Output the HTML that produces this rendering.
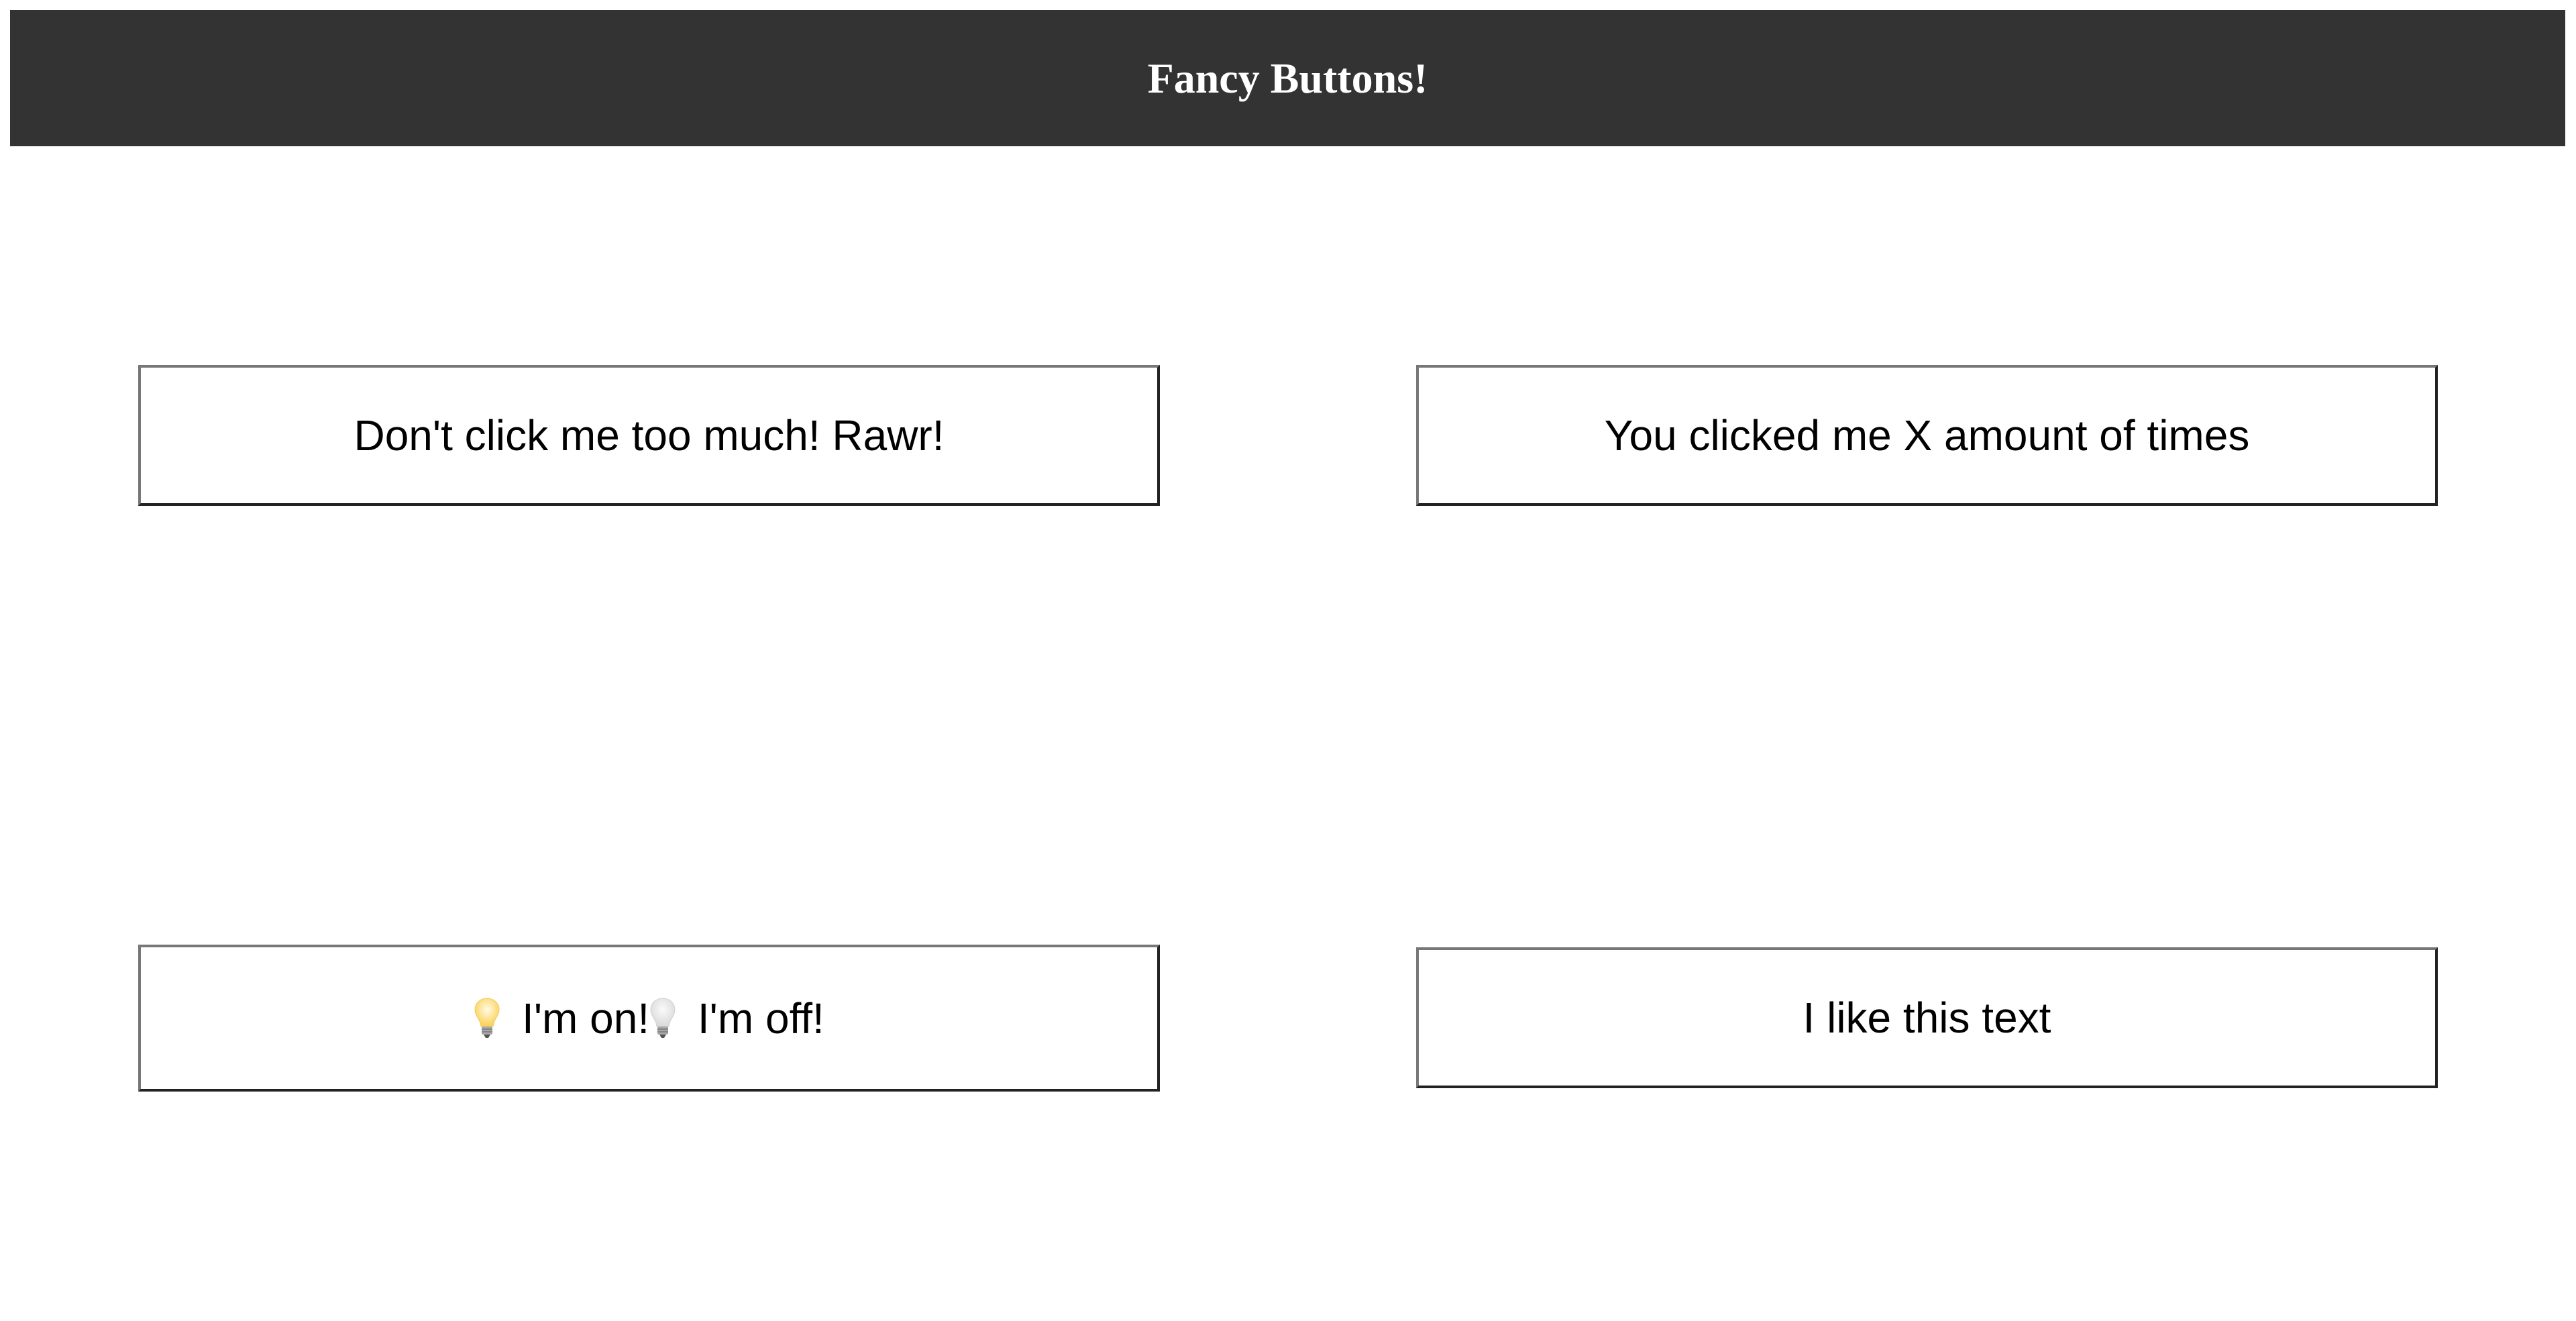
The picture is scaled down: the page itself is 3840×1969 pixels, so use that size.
<!DOCTYPE html>
<html><head><meta charset="utf-8"><style>
html,body{margin:0;padding:0;background:#fff;width:3840px;height:1969px;overflow:hidden;position:relative}
.hdr{position:absolute;left:15px;top:15px;width:3809px;height:203px;background:#333;color:#fff;font:bold 64px "Liberation Serif",serif;text-align:center;line-height:203px}
.btn{position:absolute;box-sizing:border-box;width:1523px;border:4px solid;border-color:#777 #222 #222 #777;background:#fff;font:64px "Liberation Sans",sans-serif;color:#000;display:flex;align-items:center;justify-content:center;white-space:pre}
svg{vertical-align:middle;margin-right:14px}
</style></head><body>
<div class="hdr">Fancy Buttons!</div>
<div class="btn" style="left:206px;top:544px;height:210px">Don't click me too much! Rawr!</div>
<div class="btn" style="left:2111px;top:544px;height:210px">You clicked me X amount of times</div>
<div class="btn" style="left:206px;top:1408px;height:219px"><span style="display:inline-flex;align-items:center"><svg width="40" height="64" viewBox="0 0 40 64"><defs><radialGradient id="g1" cx="50%" cy="40%" r="55%"><stop offset="0" stop-color="#fffbe8"/><stop offset="1" stop-color="#fbd35c"/></radialGradient></defs><path d="M20 2C9 2 2 10 2 19c0 8 6 13 8 20l1 5h18l1-5c2-7 8-12 8-20C38 10 31 2 20 2z" fill="url(#g1)" stroke="#f5c860" stroke-width="1"/><rect x="12" y="44" width="16" height="12" rx="2" fill="#aaa"/><path d="M12 48h16M12 52h16" stroke="#777" stroke-width="1.5"/><path d="M15 56h10l-3 5h-4z" fill="#555"/></svg><span> I'm on!</span><svg width="40" height="64" viewBox="0 0 40 64"><defs><radialGradient id="g2" cx="50%" cy="40%" r="55%"><stop offset="0" stop-color="#fafafa"/><stop offset="1" stop-color="#dcdcdc"/></radialGradient></defs><path d="M20 2C9 2 2 10 2 19c0 8 6 13 8 20l1 5h18l1-5c2-7 8-12 8-20C38 10 31 2 20 2z" fill="url(#g2)" stroke="#d0d0d0" stroke-width="1"/><rect x="12" y="44" width="16" height="12" rx="2" fill="#aaa"/><path d="M12 48h16M12 52h16" stroke="#777" stroke-width="1.5"/><path d="M15 56h10l-3 5h-4z" fill="#555"/></svg><span> I'm off!</span></span></div>
<div class="btn" style="left:2111px;top:1412px;height:210px">I like this text</div>
</body></html>
